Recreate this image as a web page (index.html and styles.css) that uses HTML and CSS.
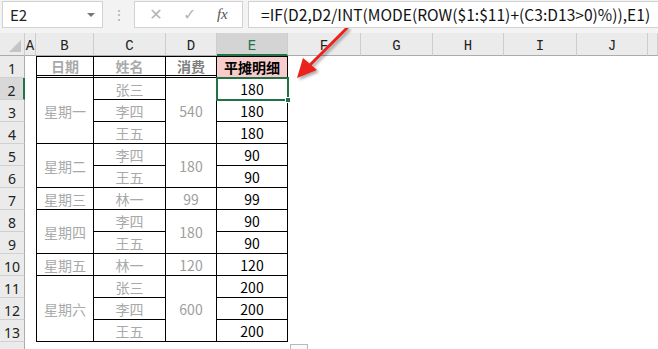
FILE: index.html
```html
<!DOCTYPE html>
<html lang="zh">
<head>
  <meta charset="UTF-8" />
  <title>平摊明细</title>
  <link rel="stylesheet" href="styles.css">
</head>
<body>

  <div class="formula-bar">
    <div class="name-box">
      <span>E2</span>
      <span class="caret"></span>
    </div>
    <div class="grip">⋮</div>
    <div class="fx-buttons">
      <span class="fx-btn">✕</span>
      <span class="fx-btn">✓</span>
      <span class="fx-btn fx">fx</span>
    </div>
    <div class="formula">=IF(D2,D2/INT(MODE(ROW($1:$11)+(C3:D13&gt;0)%)),E1)</div>
  </div>

  <div class="sheet">
    <div class="corner"><span class="tri"></span></div>
    <div class="col-head">A</div>
    <div class="col-head">B</div>
    <div class="col-head">C</div>
    <div class="col-head">D</div>
    <div class="col-head active">E</div>
    <div class="col-head">F</div>
    <div class="col-head">G</div>
    <div class="col-head">H</div>
    <div class="col-head">I</div>
    <div class="col-head">J</div>
    <div class="col-head"></div>

    <div class="row-head" style="grid-row:2">1</div>
    <div class="row-head active" style="grid-row:3">2</div>
    <div class="row-head" style="grid-row:4">3</div>
    <div class="row-head" style="grid-row:5">4</div>
    <div class="row-head" style="grid-row:6">5</div>
    <div class="row-head" style="grid-row:7">6</div>
    <div class="row-head" style="grid-row:8">7</div>
    <div class="row-head" style="grid-row:9">8</div>
    <div class="row-head" style="grid-row:10">9</div>
    <div class="row-head" style="grid-row:11">10</div>
    <div class="row-head" style="grid-row:12">11</div>
    <div class="row-head" style="grid-row:13">12</div>
    <div class="row-head" style="grid-row:14">13</div>
    <div class="row-head" style="grid-row:15"></div>

    <!-- header row -->
    <div class="cell b head top" style="grid-row:2">日期</div>
    <div class="cell c head top" style="grid-row:2">姓名</div>
    <div class="cell d head top dark" style="grid-row:2">消费</div>
    <div class="cell e head top pink" style="grid-row:2">平摊明细</div>

    <!-- 星期一 -->
    <div class="cell b" style="grid-row:3 / 6">星期一</div>
    <div class="cell c" style="grid-row:3">张三</div>
    <div class="cell c" style="grid-row:4">李四</div>
    <div class="cell c" style="grid-row:5">王五</div>
    <div class="cell d" style="grid-row:3 / 6">540</div>
    <div class="cell e selected" style="grid-row:3">180<span class="handle"></span></div>
    <div class="cell e" style="grid-row:4">180</div>
    <div class="cell e" style="grid-row:5">180</div>

    <!-- 星期二 -->
    <div class="cell b" style="grid-row:6 / 8">星期二</div>
    <div class="cell c" style="grid-row:6">李四</div>
    <div class="cell c" style="grid-row:7">王五</div>
    <div class="cell d" style="grid-row:6 / 8">180</div>
    <div class="cell e" style="grid-row:6">90</div>
    <div class="cell e" style="grid-row:7">90</div>

    <!-- 星期三 -->
    <div class="cell b" style="grid-row:8">星期三</div>
    <div class="cell c" style="grid-row:8">林一</div>
    <div class="cell d" style="grid-row:8">99</div>
    <div class="cell e" style="grid-row:8">99</div>

    <!-- 星期四 -->
    <div class="cell b" style="grid-row:9 / 11">星期四</div>
    <div class="cell c" style="grid-row:9">李四</div>
    <div class="cell c" style="grid-row:10">王五</div>
    <div class="cell d" style="grid-row:9 / 11">180</div>
    <div class="cell e" style="grid-row:9">90</div>
    <div class="cell e" style="grid-row:10">90</div>

    <!-- 星期五 -->
    <div class="cell b" style="grid-row:11">星期五</div>
    <div class="cell c" style="grid-row:11">林一</div>
    <div class="cell d" style="grid-row:11">120</div>
    <div class="cell e" style="grid-row:11">120</div>

    <!-- 星期六 -->
    <div class="cell b" style="grid-row:12 / 15">星期六</div>
    <div class="cell c" style="grid-row:12">张三</div>
    <div class="cell c" style="grid-row:13">李四</div>
    <div class="cell c" style="grid-row:14">王五</div>
    <div class="cell d" style="grid-row:12 / 15">600</div>
    <div class="cell e" style="grid-row:12">200</div>
    <div class="cell e" style="grid-row:13">200</div>
    <div class="cell e" style="grid-row:14">200</div>

    <div class="quick"></div>
  </div>

  <svg class="arrow" width="80" height="70" viewBox="0 0 80 70">
    <defs>
      <filter id="sh" x="-20%" y="-20%" width="140%" height="140%">
        <feGaussianBlur in="SourceAlpha" stdDeviation="1.5"/>
        <feOffset dx="2" dy="2"/>
        <feComponentTransfer><feFuncA type="linear" slope="0.35"/></feComponentTransfer>
        <feMerge><feMergeNode/><feMergeNode in="SourceGraphic"/></feMerge>
      </filter>
    </defs>
    <g filter="url(#sh)">
      <line x1="58" y1="0" x2="18" y2="40" stroke="#e8231f" stroke-width="3" stroke-linecap="round"/>
      <polygon points="8,50 14,30 28,42" fill="#e8231f"/>
    </g>
  </svg>

</body>
</html>
```

FILE: styles.css
```css
* {
  box-sizing: border-box;
}
body {
  margin: 0;
  width: 658px;
  height: 349px;
  overflow: hidden;
  background: #ffffff;
  font-family: "Noto Sans CJK SC", "Noto Sans", sans-serif;
  position: relative;
}

/* --- barra della formula --- */
.formula-bar {
  height: 33px;
  background: #f3f3f3;
  display: flex;
  align-items: flex-start;
  padding: 1px 0 0 2px;
}
.name-box {
  width: 101px;
  height: 27px;
  background: #fff;
  border: 1px solid #d2d2d2;
  display: flex;
  align-items: center;
  justify-content: space-between;
  padding: 0 7px 0 7px;
  font-size: 15px;
  color: #222;
}
.caret {
  width: 0;
  height: 0;
  border-left: 4px solid transparent;
  border-right: 4px solid transparent;
  border-top: 4px solid #777;
}
.grip {
  width: 31px;
  text-align: center;
  color: #b0b0b0;
  font-size: 14px;
  line-height: 27px;
}
.fx-buttons {
  width: 109px;
  height: 27px;
  background: #fff;
  border: 1px solid #d2d2d2;
  display: flex;
  align-items: center;
  justify-content: space-around;
  padding: 0 4px;
}
.fx-btn {
  color: #b4b4b4;
  font-size: 16px;
  font-family: "DejaVu Sans", sans-serif;
}
.fx-btn.fx {
  color: #555;
  font-family: "Liberation Serif", serif;
  font-style: italic;
  font-size: 15px;
}
.formula {
  margin-left: 5px;
  flex: 1;
  height: 27px;
  background: #fff;
  border: 1px solid #d2d2d2;
  border-right: none;
  font-size: 15.6px;
  line-height: 25px;
  padding-left: 12px;
  color: #111;
  white-space: nowrap;
}

/* --- foglio --- */
.sheet {
  display: grid;
  grid-template-columns: 25px 11px 58px 72px 51px 71px 73px 72px 71px 73px 71px 1fr;
  grid-template-rows: 23px repeat(13, 22px) 1fr;
  height: 316px;
  position: relative;
}
.corner {
  grid-row: 1;
  grid-column: 1;
  background: #ebebeb;
  border-right: 1px solid #cdcdcd;
  border-bottom: 1px solid #ababab;
  position: relative;
}
.tri {
  position: absolute;
  right: 3px;
  bottom: 3px;
  width: 0;
  height: 0;
  border-left: 12px solid transparent;
  border-bottom: 12px solid #c4c4c4;
}
.col-head {
  grid-row: 1;
  background: #ebebeb;
  border-right: 1px solid #cdcdcd;
  border-bottom: 1px solid #ababab;
  font-family: "Liberation Mono", monospace;
  font-size: 14px;
  color: #222;
  display: flex;
  align-items: flex-end;
  justify-content: center;
  padding-bottom: 1px;
}
.col-head.active {
  background: #d4d4d4;
  border-bottom: 2px solid #217346;
  color: #217346;
  padding-bottom: 0;
}
.row-head {
  grid-column: 1;
  background: #ebebeb;
  border-right: 1px solid #ababab;
  border-bottom: 1px solid #d0d0d0;
  font-family: "Noto Sans", sans-serif;
  font-size: 14px;
  color: #222;
  display: flex;
  align-items: flex-end;
  justify-content: center;
  line-height: 1;
  padding-bottom: 1px;
}
.row-head.active {
  background: #d8d8d8;
  border-right: 2px solid #217346;
}

.cell {
  border-right: 1px solid #000;
  border-bottom: 1px solid #000;
  display: flex;
  align-items: center;
  justify-content: center;
  font-size: 14px;
  color: #a9a9a9;
  position: relative;
}
.cell.b { grid-column: 3; border-left: 1px solid #000; }
.cell.c { grid-column: 4; }
.cell.d { grid-column: 5; color: #9e9e9e; }
.cell.e { grid-column: 6; color: #000; }
.cell.top {
  border-top: 1px solid #000;
}
.cell.head {
  font-weight: 700;
  color: #aaaaaa;
  border-bottom: 3px double #000;
}
.cell.head.dark { color: #808080; }
.cell.head.pink {
  background: #f9cccc;
  color: #000;
  border-bottom: 1px solid #000;
}
.cell.selected {
  outline: 2px solid #217346;
  outline-offset: -1px;
  z-index: 2;
}
.handle {
  position: absolute;
  right: -4px;
  bottom: -4px;
  width: 6px;
  height: 6px;
  background: #217346;
  border: 1px solid #fff;
}
.quick {
  grid-column: 6;
  grid-row: 15;
  justify-self: end;
  margin-right: -20px;
  margin-top: 2px;
  width: 18px;
  height: 10px;
  border: 1px solid #b8b8b8;
  border-bottom: none;
  background: #fafafa;
}

/* --- freccia --- */
.arrow {
  position: absolute;
  left: 289px;
  top: 28px;
}
```
